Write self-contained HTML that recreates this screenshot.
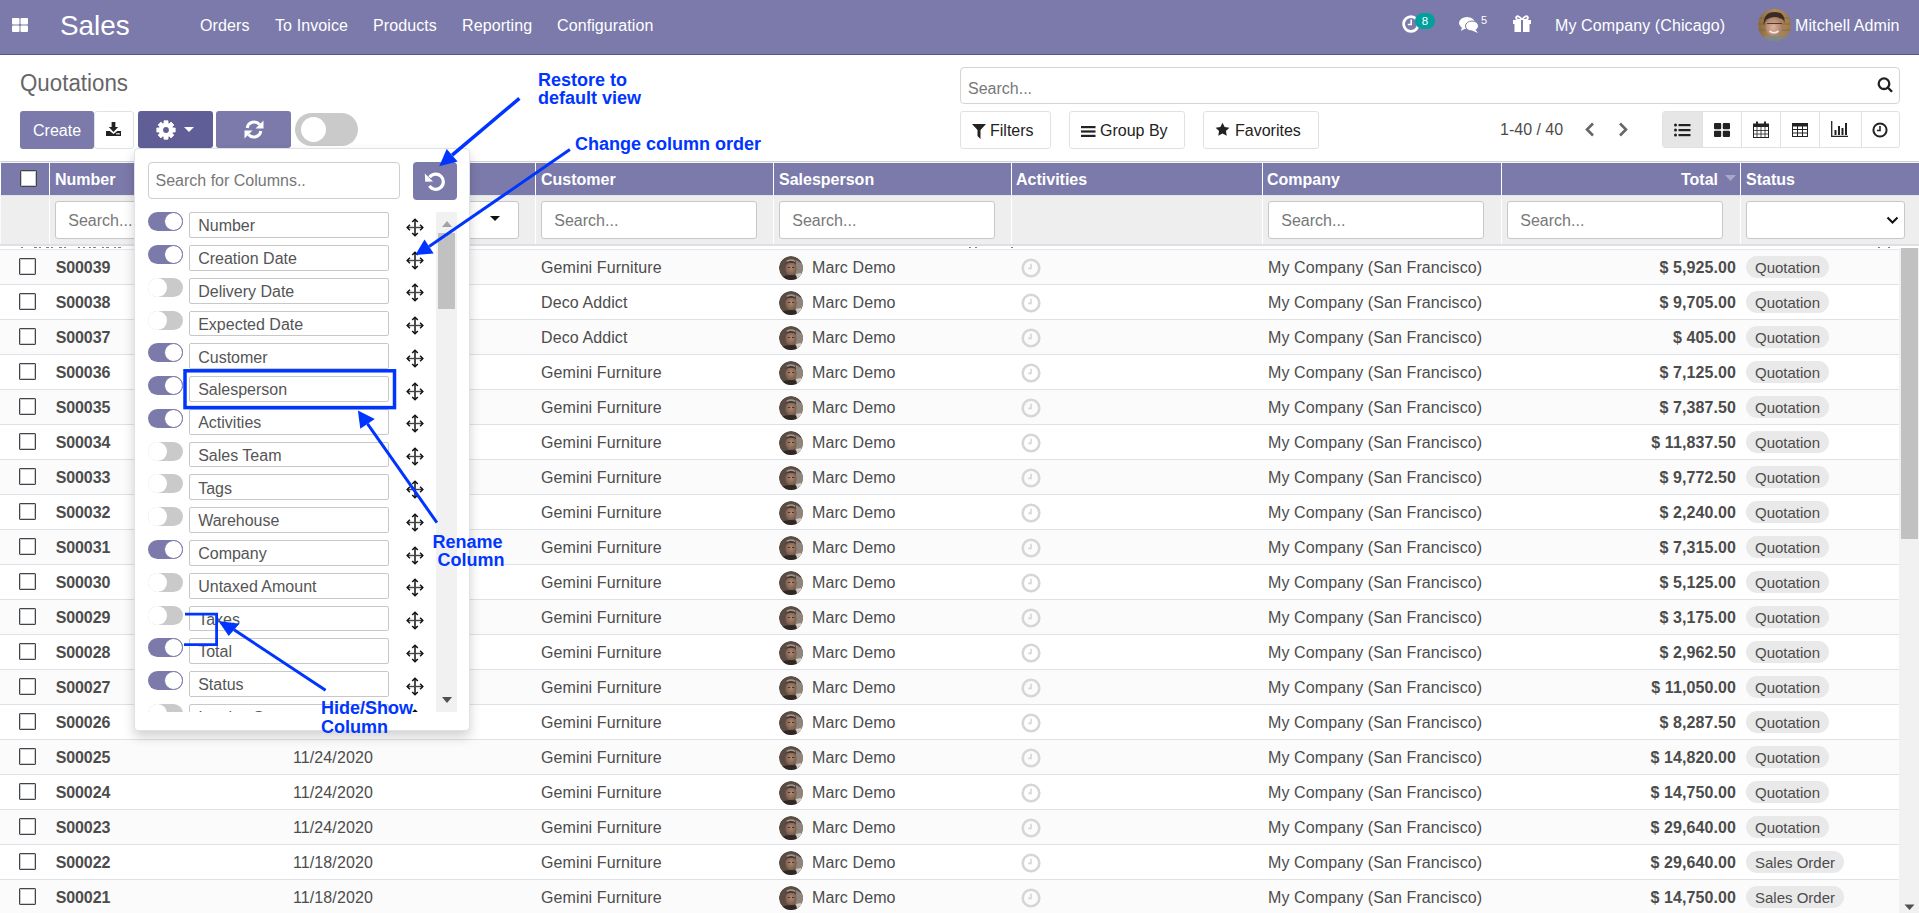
<!DOCTYPE html><html><head><meta charset="utf-8"><style>
*{box-sizing:border-box;}
html,body{margin:0;padding:0;}
body{width:1919px;height:913px;overflow:hidden;position:relative;background:#fff;font-family:"Liberation Sans",sans-serif;font-size:16px;color:#4c4c4c;}
.a{position:absolute;white-space:nowrap;}
.t16{font-size:16px;line-height:16px;}
#nav{position:absolute;left:0;top:0;width:1919px;height:55px;background:#7b7aab;border-bottom:1px solid #58568e;}
#nav .m{position:absolute;top:18px;letter-spacing:0.1px;color:#fff;font-size:16px;line-height:16px;}
.btn{position:absolute;border-radius:3px;}
.inp{position:absolute;background:#fff;border:1px solid #ccc;border-radius:3px;}
.ph{position:absolute;color:#787878;font-size:16px;line-height:16px;white-space:nowrap;}
#thead{position:absolute;left:0;top:161px;width:1919px;height:35px;background:#7b7aab;border-top:1px solid #d2d2d2;border-left:1px solid #fff;box-shadow:inset 0 1px 0 #f4f4f4;}
#thead .h{position:absolute;top:10.3px;color:#fff;font-weight:bold;font-size:16px;line-height:16px;}
#frow{position:absolute;left:0;top:195px;width:1919px;height:51px;background:#eeeeee;border-top:1px solid #e2e5e8;border-left:1px solid #fafafa;}
.vd{position:absolute;width:1px;background:#fff;}
.row{position:absolute;left:0;width:1899px;height:35px;border-bottom:1px solid #dee2e6;}
.row .c{position:absolute;top:10px;letter-spacing:0.1px;font-size:16px;line-height:16px;color:#4c4c4c;white-space:nowrap;}
.cb{position:absolute;width:17px;height:17px;border:1.4px solid #444;background:#fff;border-radius:1px;box-shadow:inset 0 0 0 1px #c6ccd3;}
.badge{position:absolute;height:22px;border-radius:11px;background:#e9e9e9;font-size:15px;line-height:23px;padding:0 9px;color:#4c4c4c;}
#popup{position:absolute;left:134px;top:148px;width:336px;height:582.5px;background:#fff;border:1px solid #dee2e6;border-radius:4px;box-shadow:0 6px 12px rgba(0,0,0,.18);}
.tg{position:absolute;width:35px;height:19px;border-radius:10px;}
.tg.on{background:#7b7aab;}
.tg.off{background:#cacaca;}
.tg .k{position:absolute;top:0;width:19px;height:19px;border-radius:50%;background:#fff;}
.tg.on .k{right:0;border:1px solid #7b7aab;}
.tg.off .k{left:0;}
.fi{position:absolute;left:54.2px;width:199.5px;height:25.8px;border:1px solid #c8c8c8;border-radius:2px;background:#fff;}
.fi span{position:absolute;left:8px;top:5.2px;font-size:16px;line-height:16px;color:#555;white-space:nowrap;}
.mv{position:absolute;left:271px;}
.ann{position:absolute;color:#0035ff;font-weight:bold;font-size:18px;line-height:17px;white-space:nowrap;}
</style></head><body>
<div id="nav">
<svg class="a" style="left:12px;top:18px" width="16" height="14" viewBox="0 0 16 14"><rect x="0" y="0" width="7.5" height="6.5" rx="1" fill="#fff"/><rect x="8.5" y="0" width="7.5" height="6.5" rx="1" fill="#fff"/><rect x="0" y="7.5" width="7.5" height="6.5" rx="1" fill="#fff"/><rect x="8.5" y="7.5" width="7.5" height="6.5" rx="1" fill="#fff"/></svg>
<div class="a" style="left:60px;top:12px;color:#fff;font-size:27.9px;line-height:28px;">Sales</div>
<div class="m" style="left:200px">Orders</div>
<div class="m" style="left:275px">To Invoice</div>
<div class="m" style="left:373px">Products</div>
<div class="m" style="left:462px">Reporting</div>
<div class="m" style="left:557px">Configuration</div>
<svg class="a" style="left:1401px;top:14px" width="20" height="20" viewBox="0 0 20 20"><circle cx="10" cy="10" r="7.4" fill="none" stroke="#fff" stroke-width="2.8"/><path d="M10.2 5.5v5H6.8" fill="none" stroke="#fff" stroke-width="1.6"/></svg>
<div class="a" style="left:1415px;top:13px;width:20px;height:16px;border-radius:8px;background:#00a09d;color:#fff;font-size:11.5px;line-height:16px;text-align:center;">8</div>
<svg class="a" style="left:1459px;top:16px" width="21" height="18" viewBox="0 0 21 18"><ellipse cx="8" cy="7" rx="8" ry="6" fill="#fff"/><path d="M3 11l-1 4 5-3z" fill="#fff"/><ellipse cx="13" cy="10" rx="6.5" ry="5" fill="#fff" stroke="#7b7aab" stroke-width="1"/><path d="M16 13l3 4-6-2.5z" fill="#fff"/></svg>
<div class="a" style="left:1481px;top:15px;color:#fff;font-size:11px;line-height:11px;">5</div>
<svg class="a" style="left:1512px;top:15px" width="20" height="17" viewBox="0 0 20 17"><path d="M10 5C8 1 4 0 4 3c0 2 4 2 6 2zM10 5c2-4 6-5 6-2 0 2-4 2-6 2z" fill="none" stroke="#fff" stroke-width="1.8"/><rect x="1" y="5" width="18" height="4" fill="#fff"/><rect x="2.5" y="9" width="15" height="8" fill="#fff"/><rect x="9" y="5" width="2" height="12" fill="#7b7aab"/></svg>
<div class="m" style="left:1555px">My Company (Chicago)</div>
<div class="a" style="left:1758px;top:8.5px;width:32.5px;height:32px;border-radius:50%;overflow:hidden;background:#9a7a50;"><svg width="33" height="32" viewBox="0 0 32 32"><defs><linearGradient id="bw" x1="0" y1="0" x2="1" y2="0"><stop offset="0" stop-color="#8c6b42"/><stop offset="0.5" stop-color="#b08c5c"/><stop offset="1" stop-color="#9c7a4c"/></linearGradient><radialGradient id="fc" cx="0.45" cy="0.5" r="0.55"><stop offset="0" stop-color="#dcb4a0"/><stop offset="1" stop-color="#a87a62"/></radialGradient></defs><rect width="32" height="32" fill="url(#bw)"/><path d="M0 9h32M0 15h32M0 21h32" stroke="#6e5434" stroke-width="0.8" opacity="0.6"/><path d="M5 16 Q5 3 16 3 Q27 3 26 14 L24 9 Q16 5 8 10z" fill="#3a2c24"/><ellipse cx="15.5" cy="18" rx="8.5" ry="10" fill="url(#fc)"/><path d="M7 11 Q16 5 25 11 L24 8 Q16 2 7 8z" fill="#3a2c24"/><path d="M8.5 14.5h6M17 14.5h6.5M14.5 14.5h2.5" stroke="#4a3a34" stroke-width="1.2"/><path d="M11 22 Q15.5 25.5 20 22" stroke="#f4ece8" stroke-width="1.6" fill="none"/><path d="M4 32 Q6 26 12 27 L20 27 Q27 26 29 32z" fill="#7d8a86"/></svg></div>
<div class="m" style="left:1795px">Mitchell Admin</div>
</div>
<div class="a" style="left:20.3px;top:72.2px;font-size:23.5px;line-height:23px;color:#666;transform:scaleX(0.95);transform-origin:0 0;">Quotations</div>
<div class="btn" style="left:20px;top:111px;width:74px;height:38px;background:#7b7aab;"><span class="a" style="left:13px;top:12px;color:#fff;font-size:16px;line-height:16px;">Create</span></div>
<div class="btn" style="left:94px;top:111px;width:40px;height:38px;background:#fff;border:1px solid #dee2e6;"></div>
<svg class="a" style="left:106px;top:122px" width="15" height="14" viewBox="0 0 16 14" preserveAspectRatio="none"><path d="M6 0h4v5h3l-5 5-5-5h3z" fill="#222"/><path d="M0 9h4l4 3 4-3h4v5H0z" fill="#222"/><rect x="11" y="11" width="1.5" height="1.5" fill="#fff"/><rect x="13" y="11" width="1.5" height="1.5" fill="#fff"/></svg>
<div class="btn" style="left:138px;top:111px;width:75px;height:37px;background:#5f5e97;"></div>
<svg class="a" style="left:156.2px;top:120.1px" width="20" height="20" viewBox="0 0 20 20"><polygon points="7.98,3.40 7.97,0.82 12.03,0.82 12.02,3.40 13.24,3.91 15.05,2.07 17.93,4.95 16.09,6.76 16.60,7.98 19.18,7.97 19.18,12.03 16.60,12.02 16.09,13.24 17.93,15.05 15.05,17.93 13.24,16.09 12.02,16.60 12.03,19.18 7.97,19.18 7.98,16.60 6.76,16.09 4.95,17.93 2.07,15.05 3.91,13.24 3.40,12.02 0.82,12.03 0.82,7.97 3.40,7.98 3.91,6.76 2.07,4.95 4.95,2.07 6.76,3.91" fill="#fff" stroke="#fff" stroke-width="0.8" stroke-linejoin="round"/><circle cx="10" cy="10" r="2.9" fill="#5f5e97"/></svg>
<svg class="a" style="left:184px;top:127px" width="10" height="5" viewBox="0 0 10 5"><path d="M0 0h10L5 5z" fill="#fff"/></svg>
<div class="btn" style="left:216px;top:111px;width:75px;height:37px;background:#7b7aab;"></div>
<svg class="a" style="left:244px;top:120px" width="20" height="19" viewBox="0 0 20 19"><path d="M3.2 8A7 7 0 0 1 15.5 4.5" fill="none" stroke="#fff" stroke-width="3"/><path d="M19.5 0.5v8h-8z" fill="#fff"/><path d="M16.8 11A7 7 0 0 1 4.5 14.5" fill="none" stroke="#fff" stroke-width="3"/><path d="M0.5 18.5v-8h8z" fill="#fff"/></svg>
<div class="a" style="left:295px;top:113px;width:63px;height:33px;border-radius:17px;background:#cacaca;"><div class="a" style="left:6px;top:4px;width:25px;height:25px;border-radius:50%;background:#fff;"></div></div>
<div class="inp" style="left:960px;top:67px;width:940px;height:37px;border-color:#d4d4d4;border-radius:4px;"></div>
<div class="ph" style="left:968px;top:80.5px;">Search...</div>
<svg class="a" style="left:1876px;top:76px" width="18" height="18" viewBox="0 0 18 18"><circle cx="8" cy="7.7" r="5.3" fill="none" stroke="#222" stroke-width="2.3"/><path d="M11.8 11.5l3.6 3.6" stroke="#222" stroke-width="2.3" stroke-linecap="round"/></svg>
<div class="btn" style="left:960px;top:111px;width:91px;height:38px;border:1px solid #dee2e6;background:#fff;"></div>
<div class="btn" style="left:1069px;top:111px;width:116px;height:38px;border:1px solid #dee2e6;background:#fff;"></div>
<div class="btn" style="left:1203px;top:111px;width:116px;height:38px;border:1px solid #dee2e6;background:#fff;"></div>
<svg class="a" style="left:972px;top:124px" width="14" height="15" viewBox="0 0 14 15"><path d="M0 0h14L8.5 6v9L5.5 12V6z" fill="#222"/></svg>
<div class="a t16" style="left:990px;top:122.7px;color:#222;">Filters</div>
<svg class="a" style="left:1081px;top:125.5px" width="14.5" height="11" viewBox="0 0 14.5 11"><rect y="0" width="14.5" height="2.2" fill="#222"/><rect y="4.4" width="14.5" height="2.2" fill="#222"/><rect y="8.8" width="14.5" height="2.2" fill="#222"/></svg>
<div class="a t16" style="left:1100px;top:122.7px;color:#222;">Group By</div>
<svg class="a" style="left:1215px;top:122px" width="15" height="15" viewBox="0 0 24 24"><path d="M12 1l3.4 7 7.6 1-5.5 5.3 1.3 7.7L12 18.3 5.2 22l1.3-7.7L1 9l7.6-1z" fill="#222"/></svg>
<div class="a t16" style="left:1235px;top:122.7px;color:#222;">Favorites</div>
<div class="a t16" style="left:1500px;top:122px;color:#4c4c4c;">1-40 / 40</div>
<svg class="a" style="left:1584px;top:122px" width="11" height="15" viewBox="0 0 11 15"><path d="M9 1.5L3 7.5l6 6" fill="none" stroke="#666" stroke-width="2.6"/></svg>
<svg class="a" style="left:1618px;top:122px" width="11" height="15" viewBox="0 0 11 15"><path d="M2 1.5l6 6-6 6" fill="none" stroke="#666" stroke-width="2.6"/></svg>
<div class="btn" style="left:1662px;top:111px;width:238px;height:37px;border:1px solid #dee2e6;background:#fff;overflow:hidden;"><div class="a" style="left:0;top:0;width:40px;height:37px;background:#e6e6e6;"></div></div>
<div class="a" style="left:1702px;top:112px;width:1px;height:35px;background:#dee2e6;"></div>
<div class="a" style="left:1741px;top:112px;width:1px;height:35px;background:#dee2e6;"></div>
<div class="a" style="left:1780px;top:112px;width:1px;height:35px;background:#dee2e6;"></div>
<div class="a" style="left:1819px;top:112px;width:1px;height:35px;background:#dee2e6;"></div>
<div class="a" style="left:1861px;top:112px;width:1px;height:35px;background:#dee2e6;"></div>
<svg class="a" style="left:1674px;top:123px" width="17" height="14" viewBox="0 0 17 14"><circle cx="1.5" cy="2" r="1.5" fill="#222"/><circle cx="1.5" cy="7" r="1.5" fill="#222"/><circle cx="1.5" cy="12" r="1.5" fill="#222"/><rect x="4.5" y="1" width="12" height="2.2" fill="#222"/><rect x="4.5" y="6" width="12" height="2.2" fill="#222"/><rect x="4.5" y="11" width="12" height="2.2" fill="#222"/></svg>
<svg class="a" style="left:1714px;top:123px" width="16" height="14" viewBox="0 0 16 14"><rect x="0" y="0" width="7.2" height="6.3" rx="1" fill="#222"/><rect x="8.8" y="0" width="7.2" height="6.3" rx="1" fill="#222"/><rect x="0" y="7.7" width="7.2" height="6.3" rx="1" fill="#222"/><rect x="8.8" y="7.7" width="7.2" height="6.3" rx="1" fill="#222"/></svg>
<svg class="a" style="left:1753px;top:121px" width="16" height="17" viewBox="0 0 16 17"><rect x="0.5" y="3" width="15" height="13.5" fill="none" stroke="#222" stroke-width="1"/><rect x="0.5" y="3" width="15" height="3" fill="#222"/><path d="M4 6v10M8 6v10M12 6v10M1 9.5h14M1 13h14" stroke="#222" stroke-width="0.8"/><rect x="3" y="0.5" width="2" height="4" fill="#222"/><rect x="11" y="0.5" width="2" height="4" fill="#222"/></svg>
<svg class="a" style="left:1792px;top:123px" width="16" height="14" viewBox="0 0 16 14"><rect x="0.5" y="0.5" width="15" height="13" fill="none" stroke="#222" stroke-width="1"/><rect x="0.5" y="0.5" width="15" height="3" fill="#222"/><path d="M5.5 3v10M10.5 3v10M1 6.5h14M1 10h14" stroke="#222" stroke-width="1"/></svg>
<svg class="a" style="left:1831px;top:121px" width="17" height="16" viewBox="0 0 17 16"><path d="M0.7 0v15.3H17" fill="none" stroke="#222" stroke-width="1.3"/><rect x="3.5" y="9" width="2" height="5" fill="#222"/><rect x="7" y="5" width="2" height="9" fill="#222"/><rect x="10.5" y="7" width="2" height="7" fill="#222"/><rect x="14" y="2" width="2" height="12" fill="#222"/></svg>
<svg class="a" style="left:1872px;top:122px" width="16" height="16" viewBox="0 0 16 16"><circle cx="8" cy="8" r="6.6" fill="none" stroke="#222" stroke-width="2"/><path d="M8 4v4.5H5" fill="none" stroke="#222" stroke-width="1.6"/></svg>
<div class="row" style="top:250px;height:35px;background:#fbfbfb;">
<div class="cb" style="left:19px;top:8px;"></div>
<div class="c" style="left:55.7px;font-weight:bold;letter-spacing:-0.1px;">S00039</div>
<div class="c" style="left:541px;">Gemini Furniture</div>
<div class="a" style="left:778.5px;top:6px;width:24px;height:24px;border-radius:50%;overflow:hidden;"><svg width="24" height="24" viewBox="0 0 24 24"><defs><radialGradient id="fg" cx="0.5" cy="0.45" r="0.5"><stop offset="0" stop-color="#b08a72"/><stop offset="1" stop-color="#7a5d4d"/></radialGradient></defs><circle cx="12" cy="12" r="12" fill="#5b4c43"/><path d="M17 4 L24 8 V24 H16z" fill="#8f857c"/><ellipse cx="12" cy="12.5" rx="5.6" ry="7.2" fill="url(#fg)"/><path d="M6.5 8 Q12 1.5 17.5 8 Q12 5.5 6.5 8z" fill="#3d322c"/><path d="M7.5 4.5 Q12 2 16.5 4.5 L16 6 Q12 4 8 6z" fill="#9a948e"/><rect x="9" y="11" width="2.2" height="0.9" fill="#3a2a22"/><rect x="13" y="11" width="2.2" height="0.9" fill="#3a2a22"/><path d="M2 21 Q12 17 22 21 V24 H2z" fill="#2f2724"/><path d="M17 18 L22 17 V22 L18 23z" fill="#d4cdc6"/></svg></div>
<div class="c" style="left:812px;">Marc Demo</div>
<svg class="a" style="left:1021px;top:8px" width="20" height="20" viewBox="0 0 20 20"><circle cx="10" cy="10" r="8.3" fill="none" stroke="#d6d6d6" stroke-width="2.6"/><path d="M10 5.8v4.6H7.2" fill="none" stroke="#d6d6d6" stroke-width="1.6"/></svg>
<div class="c" style="left:1268px;">My Company (San Francisco)</div>
<div class="c" style="right:163px;font-weight:bold;">$ 5,925.00</div>
<div class="badge" style="left:1746px;top:6px;">Quotation</div>
</div>
<div class="row" style="top:285px;height:35px;background:#fff;">
<div class="cb" style="left:19px;top:8px;"></div>
<div class="c" style="left:55.7px;font-weight:bold;letter-spacing:-0.1px;">S00038</div>
<div class="c" style="left:541px;">Deco Addict</div>
<div class="a" style="left:778.5px;top:6px;width:24px;height:24px;border-radius:50%;overflow:hidden;"><svg width="24" height="24" viewBox="0 0 24 24"><defs><radialGradient id="fg" cx="0.5" cy="0.45" r="0.5"><stop offset="0" stop-color="#b08a72"/><stop offset="1" stop-color="#7a5d4d"/></radialGradient></defs><circle cx="12" cy="12" r="12" fill="#5b4c43"/><path d="M17 4 L24 8 V24 H16z" fill="#8f857c"/><ellipse cx="12" cy="12.5" rx="5.6" ry="7.2" fill="url(#fg)"/><path d="M6.5 8 Q12 1.5 17.5 8 Q12 5.5 6.5 8z" fill="#3d322c"/><path d="M7.5 4.5 Q12 2 16.5 4.5 L16 6 Q12 4 8 6z" fill="#9a948e"/><rect x="9" y="11" width="2.2" height="0.9" fill="#3a2a22"/><rect x="13" y="11" width="2.2" height="0.9" fill="#3a2a22"/><path d="M2 21 Q12 17 22 21 V24 H2z" fill="#2f2724"/><path d="M17 18 L22 17 V22 L18 23z" fill="#d4cdc6"/></svg></div>
<div class="c" style="left:812px;">Marc Demo</div>
<svg class="a" style="left:1021px;top:8px" width="20" height="20" viewBox="0 0 20 20"><circle cx="10" cy="10" r="8.3" fill="none" stroke="#d6d6d6" stroke-width="2.6"/><path d="M10 5.8v4.6H7.2" fill="none" stroke="#d6d6d6" stroke-width="1.6"/></svg>
<div class="c" style="left:1268px;">My Company (San Francisco)</div>
<div class="c" style="right:163px;font-weight:bold;">$ 9,705.00</div>
<div class="badge" style="left:1746px;top:6px;">Quotation</div>
</div>
<div class="row" style="top:320px;height:35px;background:#fbfbfb;">
<div class="cb" style="left:19px;top:8px;"></div>
<div class="c" style="left:55.7px;font-weight:bold;letter-spacing:-0.1px;">S00037</div>
<div class="c" style="left:541px;">Deco Addict</div>
<div class="a" style="left:778.5px;top:6px;width:24px;height:24px;border-radius:50%;overflow:hidden;"><svg width="24" height="24" viewBox="0 0 24 24"><defs><radialGradient id="fg" cx="0.5" cy="0.45" r="0.5"><stop offset="0" stop-color="#b08a72"/><stop offset="1" stop-color="#7a5d4d"/></radialGradient></defs><circle cx="12" cy="12" r="12" fill="#5b4c43"/><path d="M17 4 L24 8 V24 H16z" fill="#8f857c"/><ellipse cx="12" cy="12.5" rx="5.6" ry="7.2" fill="url(#fg)"/><path d="M6.5 8 Q12 1.5 17.5 8 Q12 5.5 6.5 8z" fill="#3d322c"/><path d="M7.5 4.5 Q12 2 16.5 4.5 L16 6 Q12 4 8 6z" fill="#9a948e"/><rect x="9" y="11" width="2.2" height="0.9" fill="#3a2a22"/><rect x="13" y="11" width="2.2" height="0.9" fill="#3a2a22"/><path d="M2 21 Q12 17 22 21 V24 H2z" fill="#2f2724"/><path d="M17 18 L22 17 V22 L18 23z" fill="#d4cdc6"/></svg></div>
<div class="c" style="left:812px;">Marc Demo</div>
<svg class="a" style="left:1021px;top:8px" width="20" height="20" viewBox="0 0 20 20"><circle cx="10" cy="10" r="8.3" fill="none" stroke="#d6d6d6" stroke-width="2.6"/><path d="M10 5.8v4.6H7.2" fill="none" stroke="#d6d6d6" stroke-width="1.6"/></svg>
<div class="c" style="left:1268px;">My Company (San Francisco)</div>
<div class="c" style="right:163px;font-weight:bold;">$ 405.00</div>
<div class="badge" style="left:1746px;top:6px;">Quotation</div>
</div>
<div class="row" style="top:355px;height:35px;background:#fff;">
<div class="cb" style="left:19px;top:8px;"></div>
<div class="c" style="left:55.7px;font-weight:bold;letter-spacing:-0.1px;">S00036</div>
<div class="c" style="left:541px;">Gemini Furniture</div>
<div class="a" style="left:778.5px;top:6px;width:24px;height:24px;border-radius:50%;overflow:hidden;"><svg width="24" height="24" viewBox="0 0 24 24"><defs><radialGradient id="fg" cx="0.5" cy="0.45" r="0.5"><stop offset="0" stop-color="#b08a72"/><stop offset="1" stop-color="#7a5d4d"/></radialGradient></defs><circle cx="12" cy="12" r="12" fill="#5b4c43"/><path d="M17 4 L24 8 V24 H16z" fill="#8f857c"/><ellipse cx="12" cy="12.5" rx="5.6" ry="7.2" fill="url(#fg)"/><path d="M6.5 8 Q12 1.5 17.5 8 Q12 5.5 6.5 8z" fill="#3d322c"/><path d="M7.5 4.5 Q12 2 16.5 4.5 L16 6 Q12 4 8 6z" fill="#9a948e"/><rect x="9" y="11" width="2.2" height="0.9" fill="#3a2a22"/><rect x="13" y="11" width="2.2" height="0.9" fill="#3a2a22"/><path d="M2 21 Q12 17 22 21 V24 H2z" fill="#2f2724"/><path d="M17 18 L22 17 V22 L18 23z" fill="#d4cdc6"/></svg></div>
<div class="c" style="left:812px;">Marc Demo</div>
<svg class="a" style="left:1021px;top:8px" width="20" height="20" viewBox="0 0 20 20"><circle cx="10" cy="10" r="8.3" fill="none" stroke="#d6d6d6" stroke-width="2.6"/><path d="M10 5.8v4.6H7.2" fill="none" stroke="#d6d6d6" stroke-width="1.6"/></svg>
<div class="c" style="left:1268px;">My Company (San Francisco)</div>
<div class="c" style="right:163px;font-weight:bold;">$ 7,125.00</div>
<div class="badge" style="left:1746px;top:6px;">Quotation</div>
</div>
<div class="row" style="top:390px;height:35px;background:#fbfbfb;">
<div class="cb" style="left:19px;top:8px;"></div>
<div class="c" style="left:55.7px;font-weight:bold;letter-spacing:-0.1px;">S00035</div>
<div class="c" style="left:541px;">Gemini Furniture</div>
<div class="a" style="left:778.5px;top:6px;width:24px;height:24px;border-radius:50%;overflow:hidden;"><svg width="24" height="24" viewBox="0 0 24 24"><defs><radialGradient id="fg" cx="0.5" cy="0.45" r="0.5"><stop offset="0" stop-color="#b08a72"/><stop offset="1" stop-color="#7a5d4d"/></radialGradient></defs><circle cx="12" cy="12" r="12" fill="#5b4c43"/><path d="M17 4 L24 8 V24 H16z" fill="#8f857c"/><ellipse cx="12" cy="12.5" rx="5.6" ry="7.2" fill="url(#fg)"/><path d="M6.5 8 Q12 1.5 17.5 8 Q12 5.5 6.5 8z" fill="#3d322c"/><path d="M7.5 4.5 Q12 2 16.5 4.5 L16 6 Q12 4 8 6z" fill="#9a948e"/><rect x="9" y="11" width="2.2" height="0.9" fill="#3a2a22"/><rect x="13" y="11" width="2.2" height="0.9" fill="#3a2a22"/><path d="M2 21 Q12 17 22 21 V24 H2z" fill="#2f2724"/><path d="M17 18 L22 17 V22 L18 23z" fill="#d4cdc6"/></svg></div>
<div class="c" style="left:812px;">Marc Demo</div>
<svg class="a" style="left:1021px;top:8px" width="20" height="20" viewBox="0 0 20 20"><circle cx="10" cy="10" r="8.3" fill="none" stroke="#d6d6d6" stroke-width="2.6"/><path d="M10 5.8v4.6H7.2" fill="none" stroke="#d6d6d6" stroke-width="1.6"/></svg>
<div class="c" style="left:1268px;">My Company (San Francisco)</div>
<div class="c" style="right:163px;font-weight:bold;">$ 7,387.50</div>
<div class="badge" style="left:1746px;top:6px;">Quotation</div>
</div>
<div class="row" style="top:425px;height:35px;background:#fff;">
<div class="cb" style="left:19px;top:8px;"></div>
<div class="c" style="left:55.7px;font-weight:bold;letter-spacing:-0.1px;">S00034</div>
<div class="c" style="left:541px;">Gemini Furniture</div>
<div class="a" style="left:778.5px;top:6px;width:24px;height:24px;border-radius:50%;overflow:hidden;"><svg width="24" height="24" viewBox="0 0 24 24"><defs><radialGradient id="fg" cx="0.5" cy="0.45" r="0.5"><stop offset="0" stop-color="#b08a72"/><stop offset="1" stop-color="#7a5d4d"/></radialGradient></defs><circle cx="12" cy="12" r="12" fill="#5b4c43"/><path d="M17 4 L24 8 V24 H16z" fill="#8f857c"/><ellipse cx="12" cy="12.5" rx="5.6" ry="7.2" fill="url(#fg)"/><path d="M6.5 8 Q12 1.5 17.5 8 Q12 5.5 6.5 8z" fill="#3d322c"/><path d="M7.5 4.5 Q12 2 16.5 4.5 L16 6 Q12 4 8 6z" fill="#9a948e"/><rect x="9" y="11" width="2.2" height="0.9" fill="#3a2a22"/><rect x="13" y="11" width="2.2" height="0.9" fill="#3a2a22"/><path d="M2 21 Q12 17 22 21 V24 H2z" fill="#2f2724"/><path d="M17 18 L22 17 V22 L18 23z" fill="#d4cdc6"/></svg></div>
<div class="c" style="left:812px;">Marc Demo</div>
<svg class="a" style="left:1021px;top:8px" width="20" height="20" viewBox="0 0 20 20"><circle cx="10" cy="10" r="8.3" fill="none" stroke="#d6d6d6" stroke-width="2.6"/><path d="M10 5.8v4.6H7.2" fill="none" stroke="#d6d6d6" stroke-width="1.6"/></svg>
<div class="c" style="left:1268px;">My Company (San Francisco)</div>
<div class="c" style="right:163px;font-weight:bold;">$ 11,837.50</div>
<div class="badge" style="left:1746px;top:6px;">Quotation</div>
</div>
<div class="row" style="top:460px;height:35px;background:#fbfbfb;">
<div class="cb" style="left:19px;top:8px;"></div>
<div class="c" style="left:55.7px;font-weight:bold;letter-spacing:-0.1px;">S00033</div>
<div class="c" style="left:541px;">Gemini Furniture</div>
<div class="a" style="left:778.5px;top:6px;width:24px;height:24px;border-radius:50%;overflow:hidden;"><svg width="24" height="24" viewBox="0 0 24 24"><defs><radialGradient id="fg" cx="0.5" cy="0.45" r="0.5"><stop offset="0" stop-color="#b08a72"/><stop offset="1" stop-color="#7a5d4d"/></radialGradient></defs><circle cx="12" cy="12" r="12" fill="#5b4c43"/><path d="M17 4 L24 8 V24 H16z" fill="#8f857c"/><ellipse cx="12" cy="12.5" rx="5.6" ry="7.2" fill="url(#fg)"/><path d="M6.5 8 Q12 1.5 17.5 8 Q12 5.5 6.5 8z" fill="#3d322c"/><path d="M7.5 4.5 Q12 2 16.5 4.5 L16 6 Q12 4 8 6z" fill="#9a948e"/><rect x="9" y="11" width="2.2" height="0.9" fill="#3a2a22"/><rect x="13" y="11" width="2.2" height="0.9" fill="#3a2a22"/><path d="M2 21 Q12 17 22 21 V24 H2z" fill="#2f2724"/><path d="M17 18 L22 17 V22 L18 23z" fill="#d4cdc6"/></svg></div>
<div class="c" style="left:812px;">Marc Demo</div>
<svg class="a" style="left:1021px;top:8px" width="20" height="20" viewBox="0 0 20 20"><circle cx="10" cy="10" r="8.3" fill="none" stroke="#d6d6d6" stroke-width="2.6"/><path d="M10 5.8v4.6H7.2" fill="none" stroke="#d6d6d6" stroke-width="1.6"/></svg>
<div class="c" style="left:1268px;">My Company (San Francisco)</div>
<div class="c" style="right:163px;font-weight:bold;">$ 9,772.50</div>
<div class="badge" style="left:1746px;top:6px;">Quotation</div>
</div>
<div class="row" style="top:495px;height:35px;background:#fff;">
<div class="cb" style="left:19px;top:8px;"></div>
<div class="c" style="left:55.7px;font-weight:bold;letter-spacing:-0.1px;">S00032</div>
<div class="c" style="left:541px;">Gemini Furniture</div>
<div class="a" style="left:778.5px;top:6px;width:24px;height:24px;border-radius:50%;overflow:hidden;"><svg width="24" height="24" viewBox="0 0 24 24"><defs><radialGradient id="fg" cx="0.5" cy="0.45" r="0.5"><stop offset="0" stop-color="#b08a72"/><stop offset="1" stop-color="#7a5d4d"/></radialGradient></defs><circle cx="12" cy="12" r="12" fill="#5b4c43"/><path d="M17 4 L24 8 V24 H16z" fill="#8f857c"/><ellipse cx="12" cy="12.5" rx="5.6" ry="7.2" fill="url(#fg)"/><path d="M6.5 8 Q12 1.5 17.5 8 Q12 5.5 6.5 8z" fill="#3d322c"/><path d="M7.5 4.5 Q12 2 16.5 4.5 L16 6 Q12 4 8 6z" fill="#9a948e"/><rect x="9" y="11" width="2.2" height="0.9" fill="#3a2a22"/><rect x="13" y="11" width="2.2" height="0.9" fill="#3a2a22"/><path d="M2 21 Q12 17 22 21 V24 H2z" fill="#2f2724"/><path d="M17 18 L22 17 V22 L18 23z" fill="#d4cdc6"/></svg></div>
<div class="c" style="left:812px;">Marc Demo</div>
<svg class="a" style="left:1021px;top:8px" width="20" height="20" viewBox="0 0 20 20"><circle cx="10" cy="10" r="8.3" fill="none" stroke="#d6d6d6" stroke-width="2.6"/><path d="M10 5.8v4.6H7.2" fill="none" stroke="#d6d6d6" stroke-width="1.6"/></svg>
<div class="c" style="left:1268px;">My Company (San Francisco)</div>
<div class="c" style="right:163px;font-weight:bold;">$ 2,240.00</div>
<div class="badge" style="left:1746px;top:6px;">Quotation</div>
</div>
<div class="row" style="top:530px;height:35px;background:#fbfbfb;">
<div class="cb" style="left:19px;top:8px;"></div>
<div class="c" style="left:55.7px;font-weight:bold;letter-spacing:-0.1px;">S00031</div>
<div class="c" style="left:541px;">Gemini Furniture</div>
<div class="a" style="left:778.5px;top:6px;width:24px;height:24px;border-radius:50%;overflow:hidden;"><svg width="24" height="24" viewBox="0 0 24 24"><defs><radialGradient id="fg" cx="0.5" cy="0.45" r="0.5"><stop offset="0" stop-color="#b08a72"/><stop offset="1" stop-color="#7a5d4d"/></radialGradient></defs><circle cx="12" cy="12" r="12" fill="#5b4c43"/><path d="M17 4 L24 8 V24 H16z" fill="#8f857c"/><ellipse cx="12" cy="12.5" rx="5.6" ry="7.2" fill="url(#fg)"/><path d="M6.5 8 Q12 1.5 17.5 8 Q12 5.5 6.5 8z" fill="#3d322c"/><path d="M7.5 4.5 Q12 2 16.5 4.5 L16 6 Q12 4 8 6z" fill="#9a948e"/><rect x="9" y="11" width="2.2" height="0.9" fill="#3a2a22"/><rect x="13" y="11" width="2.2" height="0.9" fill="#3a2a22"/><path d="M2 21 Q12 17 22 21 V24 H2z" fill="#2f2724"/><path d="M17 18 L22 17 V22 L18 23z" fill="#d4cdc6"/></svg></div>
<div class="c" style="left:812px;">Marc Demo</div>
<svg class="a" style="left:1021px;top:8px" width="20" height="20" viewBox="0 0 20 20"><circle cx="10" cy="10" r="8.3" fill="none" stroke="#d6d6d6" stroke-width="2.6"/><path d="M10 5.8v4.6H7.2" fill="none" stroke="#d6d6d6" stroke-width="1.6"/></svg>
<div class="c" style="left:1268px;">My Company (San Francisco)</div>
<div class="c" style="right:163px;font-weight:bold;">$ 7,315.00</div>
<div class="badge" style="left:1746px;top:6px;">Quotation</div>
</div>
<div class="row" style="top:565px;height:35px;background:#fff;">
<div class="cb" style="left:19px;top:8px;"></div>
<div class="c" style="left:55.7px;font-weight:bold;letter-spacing:-0.1px;">S00030</div>
<div class="c" style="left:541px;">Gemini Furniture</div>
<div class="a" style="left:778.5px;top:6px;width:24px;height:24px;border-radius:50%;overflow:hidden;"><svg width="24" height="24" viewBox="0 0 24 24"><defs><radialGradient id="fg" cx="0.5" cy="0.45" r="0.5"><stop offset="0" stop-color="#b08a72"/><stop offset="1" stop-color="#7a5d4d"/></radialGradient></defs><circle cx="12" cy="12" r="12" fill="#5b4c43"/><path d="M17 4 L24 8 V24 H16z" fill="#8f857c"/><ellipse cx="12" cy="12.5" rx="5.6" ry="7.2" fill="url(#fg)"/><path d="M6.5 8 Q12 1.5 17.5 8 Q12 5.5 6.5 8z" fill="#3d322c"/><path d="M7.5 4.5 Q12 2 16.5 4.5 L16 6 Q12 4 8 6z" fill="#9a948e"/><rect x="9" y="11" width="2.2" height="0.9" fill="#3a2a22"/><rect x="13" y="11" width="2.2" height="0.9" fill="#3a2a22"/><path d="M2 21 Q12 17 22 21 V24 H2z" fill="#2f2724"/><path d="M17 18 L22 17 V22 L18 23z" fill="#d4cdc6"/></svg></div>
<div class="c" style="left:812px;">Marc Demo</div>
<svg class="a" style="left:1021px;top:8px" width="20" height="20" viewBox="0 0 20 20"><circle cx="10" cy="10" r="8.3" fill="none" stroke="#d6d6d6" stroke-width="2.6"/><path d="M10 5.8v4.6H7.2" fill="none" stroke="#d6d6d6" stroke-width="1.6"/></svg>
<div class="c" style="left:1268px;">My Company (San Francisco)</div>
<div class="c" style="right:163px;font-weight:bold;">$ 5,125.00</div>
<div class="badge" style="left:1746px;top:6px;">Quotation</div>
</div>
<div class="row" style="top:600px;height:35px;background:#fbfbfb;">
<div class="cb" style="left:19px;top:8px;"></div>
<div class="c" style="left:55.7px;font-weight:bold;letter-spacing:-0.1px;">S00029</div>
<div class="c" style="left:541px;">Gemini Furniture</div>
<div class="a" style="left:778.5px;top:6px;width:24px;height:24px;border-radius:50%;overflow:hidden;"><svg width="24" height="24" viewBox="0 0 24 24"><defs><radialGradient id="fg" cx="0.5" cy="0.45" r="0.5"><stop offset="0" stop-color="#b08a72"/><stop offset="1" stop-color="#7a5d4d"/></radialGradient></defs><circle cx="12" cy="12" r="12" fill="#5b4c43"/><path d="M17 4 L24 8 V24 H16z" fill="#8f857c"/><ellipse cx="12" cy="12.5" rx="5.6" ry="7.2" fill="url(#fg)"/><path d="M6.5 8 Q12 1.5 17.5 8 Q12 5.5 6.5 8z" fill="#3d322c"/><path d="M7.5 4.5 Q12 2 16.5 4.5 L16 6 Q12 4 8 6z" fill="#9a948e"/><rect x="9" y="11" width="2.2" height="0.9" fill="#3a2a22"/><rect x="13" y="11" width="2.2" height="0.9" fill="#3a2a22"/><path d="M2 21 Q12 17 22 21 V24 H2z" fill="#2f2724"/><path d="M17 18 L22 17 V22 L18 23z" fill="#d4cdc6"/></svg></div>
<div class="c" style="left:812px;">Marc Demo</div>
<svg class="a" style="left:1021px;top:8px" width="20" height="20" viewBox="0 0 20 20"><circle cx="10" cy="10" r="8.3" fill="none" stroke="#d6d6d6" stroke-width="2.6"/><path d="M10 5.8v4.6H7.2" fill="none" stroke="#d6d6d6" stroke-width="1.6"/></svg>
<div class="c" style="left:1268px;">My Company (San Francisco)</div>
<div class="c" style="right:163px;font-weight:bold;">$ 3,175.00</div>
<div class="badge" style="left:1746px;top:6px;">Quotation</div>
</div>
<div class="row" style="top:635px;height:35px;background:#fff;">
<div class="cb" style="left:19px;top:8px;"></div>
<div class="c" style="left:55.7px;font-weight:bold;letter-spacing:-0.1px;">S00028</div>
<div class="c" style="left:541px;">Gemini Furniture</div>
<div class="a" style="left:778.5px;top:6px;width:24px;height:24px;border-radius:50%;overflow:hidden;"><svg width="24" height="24" viewBox="0 0 24 24"><defs><radialGradient id="fg" cx="0.5" cy="0.45" r="0.5"><stop offset="0" stop-color="#b08a72"/><stop offset="1" stop-color="#7a5d4d"/></radialGradient></defs><circle cx="12" cy="12" r="12" fill="#5b4c43"/><path d="M17 4 L24 8 V24 H16z" fill="#8f857c"/><ellipse cx="12" cy="12.5" rx="5.6" ry="7.2" fill="url(#fg)"/><path d="M6.5 8 Q12 1.5 17.5 8 Q12 5.5 6.5 8z" fill="#3d322c"/><path d="M7.5 4.5 Q12 2 16.5 4.5 L16 6 Q12 4 8 6z" fill="#9a948e"/><rect x="9" y="11" width="2.2" height="0.9" fill="#3a2a22"/><rect x="13" y="11" width="2.2" height="0.9" fill="#3a2a22"/><path d="M2 21 Q12 17 22 21 V24 H2z" fill="#2f2724"/><path d="M17 18 L22 17 V22 L18 23z" fill="#d4cdc6"/></svg></div>
<div class="c" style="left:812px;">Marc Demo</div>
<svg class="a" style="left:1021px;top:8px" width="20" height="20" viewBox="0 0 20 20"><circle cx="10" cy="10" r="8.3" fill="none" stroke="#d6d6d6" stroke-width="2.6"/><path d="M10 5.8v4.6H7.2" fill="none" stroke="#d6d6d6" stroke-width="1.6"/></svg>
<div class="c" style="left:1268px;">My Company (San Francisco)</div>
<div class="c" style="right:163px;font-weight:bold;">$ 2,962.50</div>
<div class="badge" style="left:1746px;top:6px;">Quotation</div>
</div>
<div class="row" style="top:670px;height:35px;background:#fbfbfb;">
<div class="cb" style="left:19px;top:8px;"></div>
<div class="c" style="left:55.7px;font-weight:bold;letter-spacing:-0.1px;">S00027</div>
<div class="c" style="left:541px;">Gemini Furniture</div>
<div class="a" style="left:778.5px;top:6px;width:24px;height:24px;border-radius:50%;overflow:hidden;"><svg width="24" height="24" viewBox="0 0 24 24"><defs><radialGradient id="fg" cx="0.5" cy="0.45" r="0.5"><stop offset="0" stop-color="#b08a72"/><stop offset="1" stop-color="#7a5d4d"/></radialGradient></defs><circle cx="12" cy="12" r="12" fill="#5b4c43"/><path d="M17 4 L24 8 V24 H16z" fill="#8f857c"/><ellipse cx="12" cy="12.5" rx="5.6" ry="7.2" fill="url(#fg)"/><path d="M6.5 8 Q12 1.5 17.5 8 Q12 5.5 6.5 8z" fill="#3d322c"/><path d="M7.5 4.5 Q12 2 16.5 4.5 L16 6 Q12 4 8 6z" fill="#9a948e"/><rect x="9" y="11" width="2.2" height="0.9" fill="#3a2a22"/><rect x="13" y="11" width="2.2" height="0.9" fill="#3a2a22"/><path d="M2 21 Q12 17 22 21 V24 H2z" fill="#2f2724"/><path d="M17 18 L22 17 V22 L18 23z" fill="#d4cdc6"/></svg></div>
<div class="c" style="left:812px;">Marc Demo</div>
<svg class="a" style="left:1021px;top:8px" width="20" height="20" viewBox="0 0 20 20"><circle cx="10" cy="10" r="8.3" fill="none" stroke="#d6d6d6" stroke-width="2.6"/><path d="M10 5.8v4.6H7.2" fill="none" stroke="#d6d6d6" stroke-width="1.6"/></svg>
<div class="c" style="left:1268px;">My Company (San Francisco)</div>
<div class="c" style="right:163px;font-weight:bold;">$ 11,050.00</div>
<div class="badge" style="left:1746px;top:6px;">Quotation</div>
</div>
<div class="row" style="top:705px;height:35px;background:#fff;">
<div class="cb" style="left:19px;top:8px;"></div>
<div class="c" style="left:55.7px;font-weight:bold;letter-spacing:-0.1px;">S00026</div>
<div class="c" style="left:293px;">11/24/2020</div>
<div class="c" style="left:541px;">Gemini Furniture</div>
<div class="a" style="left:778.5px;top:6px;width:24px;height:24px;border-radius:50%;overflow:hidden;"><svg width="24" height="24" viewBox="0 0 24 24"><defs><radialGradient id="fg" cx="0.5" cy="0.45" r="0.5"><stop offset="0" stop-color="#b08a72"/><stop offset="1" stop-color="#7a5d4d"/></radialGradient></defs><circle cx="12" cy="12" r="12" fill="#5b4c43"/><path d="M17 4 L24 8 V24 H16z" fill="#8f857c"/><ellipse cx="12" cy="12.5" rx="5.6" ry="7.2" fill="url(#fg)"/><path d="M6.5 8 Q12 1.5 17.5 8 Q12 5.5 6.5 8z" fill="#3d322c"/><path d="M7.5 4.5 Q12 2 16.5 4.5 L16 6 Q12 4 8 6z" fill="#9a948e"/><rect x="9" y="11" width="2.2" height="0.9" fill="#3a2a22"/><rect x="13" y="11" width="2.2" height="0.9" fill="#3a2a22"/><path d="M2 21 Q12 17 22 21 V24 H2z" fill="#2f2724"/><path d="M17 18 L22 17 V22 L18 23z" fill="#d4cdc6"/></svg></div>
<div class="c" style="left:812px;">Marc Demo</div>
<svg class="a" style="left:1021px;top:8px" width="20" height="20" viewBox="0 0 20 20"><circle cx="10" cy="10" r="8.3" fill="none" stroke="#d6d6d6" stroke-width="2.6"/><path d="M10 5.8v4.6H7.2" fill="none" stroke="#d6d6d6" stroke-width="1.6"/></svg>
<div class="c" style="left:1268px;">My Company (San Francisco)</div>
<div class="c" style="right:163px;font-weight:bold;">$ 8,287.50</div>
<div class="badge" style="left:1746px;top:6px;">Quotation</div>
</div>
<div class="row" style="top:740px;height:35px;background:#fbfbfb;">
<div class="cb" style="left:19px;top:8px;"></div>
<div class="c" style="left:55.7px;font-weight:bold;letter-spacing:-0.1px;">S00025</div>
<div class="c" style="left:293px;">11/24/2020</div>
<div class="c" style="left:541px;">Gemini Furniture</div>
<div class="a" style="left:778.5px;top:6px;width:24px;height:24px;border-radius:50%;overflow:hidden;"><svg width="24" height="24" viewBox="0 0 24 24"><defs><radialGradient id="fg" cx="0.5" cy="0.45" r="0.5"><stop offset="0" stop-color="#b08a72"/><stop offset="1" stop-color="#7a5d4d"/></radialGradient></defs><circle cx="12" cy="12" r="12" fill="#5b4c43"/><path d="M17 4 L24 8 V24 H16z" fill="#8f857c"/><ellipse cx="12" cy="12.5" rx="5.6" ry="7.2" fill="url(#fg)"/><path d="M6.5 8 Q12 1.5 17.5 8 Q12 5.5 6.5 8z" fill="#3d322c"/><path d="M7.5 4.5 Q12 2 16.5 4.5 L16 6 Q12 4 8 6z" fill="#9a948e"/><rect x="9" y="11" width="2.2" height="0.9" fill="#3a2a22"/><rect x="13" y="11" width="2.2" height="0.9" fill="#3a2a22"/><path d="M2 21 Q12 17 22 21 V24 H2z" fill="#2f2724"/><path d="M17 18 L22 17 V22 L18 23z" fill="#d4cdc6"/></svg></div>
<div class="c" style="left:812px;">Marc Demo</div>
<svg class="a" style="left:1021px;top:8px" width="20" height="20" viewBox="0 0 20 20"><circle cx="10" cy="10" r="8.3" fill="none" stroke="#d6d6d6" stroke-width="2.6"/><path d="M10 5.8v4.6H7.2" fill="none" stroke="#d6d6d6" stroke-width="1.6"/></svg>
<div class="c" style="left:1268px;">My Company (San Francisco)</div>
<div class="c" style="right:163px;font-weight:bold;">$ 14,820.00</div>
<div class="badge" style="left:1746px;top:6px;">Quotation</div>
</div>
<div class="row" style="top:775px;height:35px;background:#fff;">
<div class="cb" style="left:19px;top:8px;"></div>
<div class="c" style="left:55.7px;font-weight:bold;letter-spacing:-0.1px;">S00024</div>
<div class="c" style="left:293px;">11/24/2020</div>
<div class="c" style="left:541px;">Gemini Furniture</div>
<div class="a" style="left:778.5px;top:6px;width:24px;height:24px;border-radius:50%;overflow:hidden;"><svg width="24" height="24" viewBox="0 0 24 24"><defs><radialGradient id="fg" cx="0.5" cy="0.45" r="0.5"><stop offset="0" stop-color="#b08a72"/><stop offset="1" stop-color="#7a5d4d"/></radialGradient></defs><circle cx="12" cy="12" r="12" fill="#5b4c43"/><path d="M17 4 L24 8 V24 H16z" fill="#8f857c"/><ellipse cx="12" cy="12.5" rx="5.6" ry="7.2" fill="url(#fg)"/><path d="M6.5 8 Q12 1.5 17.5 8 Q12 5.5 6.5 8z" fill="#3d322c"/><path d="M7.5 4.5 Q12 2 16.5 4.5 L16 6 Q12 4 8 6z" fill="#9a948e"/><rect x="9" y="11" width="2.2" height="0.9" fill="#3a2a22"/><rect x="13" y="11" width="2.2" height="0.9" fill="#3a2a22"/><path d="M2 21 Q12 17 22 21 V24 H2z" fill="#2f2724"/><path d="M17 18 L22 17 V22 L18 23z" fill="#d4cdc6"/></svg></div>
<div class="c" style="left:812px;">Marc Demo</div>
<svg class="a" style="left:1021px;top:8px" width="20" height="20" viewBox="0 0 20 20"><circle cx="10" cy="10" r="8.3" fill="none" stroke="#d6d6d6" stroke-width="2.6"/><path d="M10 5.8v4.6H7.2" fill="none" stroke="#d6d6d6" stroke-width="1.6"/></svg>
<div class="c" style="left:1268px;">My Company (San Francisco)</div>
<div class="c" style="right:163px;font-weight:bold;">$ 14,750.00</div>
<div class="badge" style="left:1746px;top:6px;">Quotation</div>
</div>
<div class="row" style="top:810px;height:35px;background:#fbfbfb;">
<div class="cb" style="left:19px;top:8px;"></div>
<div class="c" style="left:55.7px;font-weight:bold;letter-spacing:-0.1px;">S00023</div>
<div class="c" style="left:293px;">11/24/2020</div>
<div class="c" style="left:541px;">Gemini Furniture</div>
<div class="a" style="left:778.5px;top:6px;width:24px;height:24px;border-radius:50%;overflow:hidden;"><svg width="24" height="24" viewBox="0 0 24 24"><defs><radialGradient id="fg" cx="0.5" cy="0.45" r="0.5"><stop offset="0" stop-color="#b08a72"/><stop offset="1" stop-color="#7a5d4d"/></radialGradient></defs><circle cx="12" cy="12" r="12" fill="#5b4c43"/><path d="M17 4 L24 8 V24 H16z" fill="#8f857c"/><ellipse cx="12" cy="12.5" rx="5.6" ry="7.2" fill="url(#fg)"/><path d="M6.5 8 Q12 1.5 17.5 8 Q12 5.5 6.5 8z" fill="#3d322c"/><path d="M7.5 4.5 Q12 2 16.5 4.5 L16 6 Q12 4 8 6z" fill="#9a948e"/><rect x="9" y="11" width="2.2" height="0.9" fill="#3a2a22"/><rect x="13" y="11" width="2.2" height="0.9" fill="#3a2a22"/><path d="M2 21 Q12 17 22 21 V24 H2z" fill="#2f2724"/><path d="M17 18 L22 17 V22 L18 23z" fill="#d4cdc6"/></svg></div>
<div class="c" style="left:812px;">Marc Demo</div>
<svg class="a" style="left:1021px;top:8px" width="20" height="20" viewBox="0 0 20 20"><circle cx="10" cy="10" r="8.3" fill="none" stroke="#d6d6d6" stroke-width="2.6"/><path d="M10 5.8v4.6H7.2" fill="none" stroke="#d6d6d6" stroke-width="1.6"/></svg>
<div class="c" style="left:1268px;">My Company (San Francisco)</div>
<div class="c" style="right:163px;font-weight:bold;">$ 29,640.00</div>
<div class="badge" style="left:1746px;top:6px;">Quotation</div>
</div>
<div class="row" style="top:845px;height:35px;background:#fff;">
<div class="cb" style="left:19px;top:8px;"></div>
<div class="c" style="left:55.7px;font-weight:bold;letter-spacing:-0.1px;">S00022</div>
<div class="c" style="left:293px;">11/18/2020</div>
<div class="c" style="left:541px;">Gemini Furniture</div>
<div class="a" style="left:778.5px;top:6px;width:24px;height:24px;border-radius:50%;overflow:hidden;"><svg width="24" height="24" viewBox="0 0 24 24"><defs><radialGradient id="fg" cx="0.5" cy="0.45" r="0.5"><stop offset="0" stop-color="#b08a72"/><stop offset="1" stop-color="#7a5d4d"/></radialGradient></defs><circle cx="12" cy="12" r="12" fill="#5b4c43"/><path d="M17 4 L24 8 V24 H16z" fill="#8f857c"/><ellipse cx="12" cy="12.5" rx="5.6" ry="7.2" fill="url(#fg)"/><path d="M6.5 8 Q12 1.5 17.5 8 Q12 5.5 6.5 8z" fill="#3d322c"/><path d="M7.5 4.5 Q12 2 16.5 4.5 L16 6 Q12 4 8 6z" fill="#9a948e"/><rect x="9" y="11" width="2.2" height="0.9" fill="#3a2a22"/><rect x="13" y="11" width="2.2" height="0.9" fill="#3a2a22"/><path d="M2 21 Q12 17 22 21 V24 H2z" fill="#2f2724"/><path d="M17 18 L22 17 V22 L18 23z" fill="#d4cdc6"/></svg></div>
<div class="c" style="left:812px;">Marc Demo</div>
<svg class="a" style="left:1021px;top:8px" width="20" height="20" viewBox="0 0 20 20"><circle cx="10" cy="10" r="8.3" fill="none" stroke="#d6d6d6" stroke-width="2.6"/><path d="M10 5.8v4.6H7.2" fill="none" stroke="#d6d6d6" stroke-width="1.6"/></svg>
<div class="c" style="left:1268px;">My Company (San Francisco)</div>
<div class="c" style="right:163px;font-weight:bold;">$ 29,640.00</div>
<div class="badge" style="left:1746px;top:6px;">Sales Order</div>
</div>
<div class="row" style="top:880px;height:35px;background:#fbfbfb;">
<div class="cb" style="left:19px;top:8px;"></div>
<div class="c" style="left:55.7px;font-weight:bold;letter-spacing:-0.1px;">S00021</div>
<div class="c" style="left:293px;">11/18/2020</div>
<div class="c" style="left:541px;">Gemini Furniture</div>
<div class="a" style="left:778.5px;top:6px;width:24px;height:24px;border-radius:50%;overflow:hidden;"><svg width="24" height="24" viewBox="0 0 24 24"><defs><radialGradient id="fg" cx="0.5" cy="0.45" r="0.5"><stop offset="0" stop-color="#b08a72"/><stop offset="1" stop-color="#7a5d4d"/></radialGradient></defs><circle cx="12" cy="12" r="12" fill="#5b4c43"/><path d="M17 4 L24 8 V24 H16z" fill="#8f857c"/><ellipse cx="12" cy="12.5" rx="5.6" ry="7.2" fill="url(#fg)"/><path d="M6.5 8 Q12 1.5 17.5 8 Q12 5.5 6.5 8z" fill="#3d322c"/><path d="M7.5 4.5 Q12 2 16.5 4.5 L16 6 Q12 4 8 6z" fill="#9a948e"/><rect x="9" y="11" width="2.2" height="0.9" fill="#3a2a22"/><rect x="13" y="11" width="2.2" height="0.9" fill="#3a2a22"/><path d="M2 21 Q12 17 22 21 V24 H2z" fill="#2f2724"/><path d="M17 18 L22 17 V22 L18 23z" fill="#d4cdc6"/></svg></div>
<div class="c" style="left:812px;">Marc Demo</div>
<svg class="a" style="left:1021px;top:8px" width="20" height="20" viewBox="0 0 20 20"><circle cx="10" cy="10" r="8.3" fill="none" stroke="#d6d6d6" stroke-width="2.6"/><path d="M10 5.8v4.6H7.2" fill="none" stroke="#d6d6d6" stroke-width="1.6"/></svg>
<div class="c" style="left:1268px;">My Company (San Francisco)</div>
<div class="c" style="right:163px;font-weight:bold;">$ 14,750.00</div>
<div class="badge" style="left:1746px;top:6px;">Sales Order</div>
</div>
<div class="a" style="left:0;top:245px;width:1919px;height:5px;background:#fff;"></div>
<div class="a" style="left:0;top:249px;width:1899px;height:1px;background:#e3e6ea;"></div>
<div class="a" style="left:20.6px;top:246.8px;width:2.6px;height:1.2px;background:#555;opacity:0.75;"></div><div class="a" style="left:34.3px;top:246.8px;width:2.6px;height:1.2px;background:#555;opacity:0.75;"></div><div class="a" style="left:38.6px;top:246.8px;width:2.6px;height:1.2px;background:#555;opacity:0.75;"></div><div class="a" style="left:46.3px;top:246.8px;width:2.6px;height:1.2px;background:#555;opacity:0.75;"></div><div class="a" style="left:50.9px;top:246.8px;width:2.6px;height:1.2px;background:#555;opacity:0.75;"></div><div class="a" style="left:59.3px;top:246.8px;width:2.6px;height:1.2px;background:#555;opacity:0.75;"></div><div class="a" style="left:63.9px;top:246.8px;width:2.6px;height:1.2px;background:#555;opacity:0.75;"></div><div class="a" style="left:77.6px;top:246.8px;width:2.6px;height:1.2px;background:#555;opacity:0.75;"></div><div class="a" style="left:82.5px;top:246.8px;width:2.6px;height:1.2px;background:#555;opacity:0.75;"></div><div class="a" style="left:88.5px;top:246.8px;width:2.6px;height:1.2px;background:#555;opacity:0.75;"></div><div class="a" style="left:93.1px;top:246.8px;width:2.6px;height:1.2px;background:#555;opacity:0.75;"></div><div class="a" style="left:101.9px;top:246.8px;width:2.6px;height:1.2px;background:#555;opacity:0.75;"></div><div class="a" style="left:106.1px;top:246.8px;width:2.6px;height:1.2px;background:#555;opacity:0.75;"></div><div class="a" style="left:113.9px;top:246.8px;width:2.6px;height:1.2px;background:#555;opacity:0.75;"></div><div class="a" style="left:118.4px;top:246.8px;width:2.6px;height:1.2px;background:#555;opacity:0.75;"></div><div class="a" style="left:968.8px;top:246.8px;width:2.6px;height:1.2px;background:#555;opacity:0.75;"></div><div class="a" style="left:974.5px;top:246.8px;width:2.6px;height:1.2px;background:#555;opacity:0.75;"></div><div class="a" style="left:1010.6px;top:246.8px;width:2.6px;height:1.2px;background:#555;opacity:0.75;"></div><div class="a" style="left:1877.6px;top:246.8px;width:2.6px;height:1.2px;background:#555;opacity:0.75;"></div><div class="a" style="left:1887.6px;top:246.8px;width:2.6px;height:1.2px;background:#555;opacity:0.75;"></div>
<div class="a" style="left:1899px;top:248px;width:20px;height:665px;background:#f1f1f1;"></div>
<div class="a" style="left:1901px;top:248px;width:17px;height:291px;background:#c1c1c1;"></div>
<svg class="a" style="left:1904px;top:904px" width="11" height="7" viewBox="0 0 11 7"><path d="M0.5 0.5h10L5.5 6z" fill="#505050"/></svg>
<div id="thead">
<div class="cb" style="left:19px;top:7.5px;"></div>
<div class="h" style="left:54px">Number</div>
<div class="h" style="left:540px">Customer</div>
<div class="h" style="left:778px">Salesperson</div>
<div class="h" style="left:1015px">Activities</div>
<div class="h" style="left:1266px">Company</div>
<div class="h" style="left:1745px">Status</div>
<div class="h" style="right:201px">Total</div>
<svg class="a" style="left:1724px;top:13px" width="11" height="6" viewBox="0 0 11 6"><path d="M0 0h11L5.5 6z" fill="#a9a8cc"/></svg>
<div class="vd" style="left:48px;top:1px;height:33px;"></div>
<div class="vd" style="left:286px;top:1px;height:33px;"></div>
<div class="vd" style="left:534px;top:1px;height:33px;"></div>
<div class="vd" style="left:772px;top:1px;height:33px;"></div>
<div class="vd" style="left:1010px;top:1px;height:33px;"></div>
<div class="vd" style="left:1261px;top:1px;height:33px;"></div>
<div class="vd" style="left:1500px;top:1px;height:33px;"></div>
<div class="vd" style="left:1739px;top:1px;height:33px;"></div>
</div>
<div id="frow">
<div class="vd" style="left:48px;top:0;height:48px;background:#fff;"></div>
<div class="vd" style="left:286px;top:0;height:48px;background:#fff;"></div>
<div class="vd" style="left:534px;top:0;height:48px;background:#fff;"></div>
<div class="vd" style="left:772px;top:0;height:48px;background:#fff;"></div>
<div class="vd" style="left:1010px;top:0;height:48px;background:#fff;"></div>
<div class="vd" style="left:1261px;top:0;height:48px;background:#fff;"></div>
<div class="vd" style="left:1500px;top:0;height:48px;background:#fff;"></div>
<div class="vd" style="left:1739px;top:0;height:48px;background:#fff;"></div>
<div class="inp" style="left:54px;top:5px;width:216px;height:38px;border-color:#c8c8c8;"></div>
<div class="ph" style="left:67.3px;top:17px;">Search...</div>
<div class="inp" style="left:540px;top:5px;width:216px;height:38px;border-color:#c8c8c8;"></div>
<div class="ph" style="left:553.3px;top:17px;">Search...</div>
<div class="inp" style="left:778px;top:5px;width:216px;height:38px;border-color:#c8c8c8;"></div>
<div class="ph" style="left:791.3px;top:17px;">Search...</div>
<div class="inp" style="left:1267px;top:5px;width:216px;height:38px;border-color:#c8c8c8;"></div>
<div class="ph" style="left:1280.3px;top:17px;">Search...</div>
<div class="inp" style="left:1506px;top:5px;width:216px;height:38px;border-color:#c8c8c8;"></div>
<div class="ph" style="left:1519.3px;top:17px;">Search...</div>
<div class="inp" style="left:292px;top:5px;width:226px;height:38px;border-color:#c8c8c8;"></div>
<svg class="a" style="left:489px;top:20px" width="10" height="5" viewBox="0 0 10 5"><path d="M0 0h10L5 5z" fill="#111"/></svg>
<div class="inp" style="left:1745px;top:5px;width:159px;height:38px;border-color:#c8c8c8;"></div>
<svg class="a" style="left:1885px;top:20px" width="13" height="8" viewBox="0 0 13 8"><path d="M1.5 1.5l5 5 5-5" fill="none" stroke="#111" stroke-width="2"/></svg>
<div class="a" style="left:-1px;top:48px;width:1920px;height:2px;background:#dde0e4;"></div>
</div>
<div id="popup">
<div class="inp" style="left:13px;top:13.3px;width:252px;height:36.5px;border-color:#cfcfcf;border-radius:4px;"></div>
<div class="ph" style="left:20.5px;top:24px;color:#777;">Search for Columns..</div>
<div class="btn" style="left:278px;top:13px;width:44px;height:38px;background:#7b7aab;border-radius:4px;"></div>
<svg class="a" style="left:288px;top:21px" width="22" height="22" viewBox="0 0 22 22"><path d="M6.6 7.2A7.6 7.6 0 1 1 6.4 15.9" fill="none" stroke="#fff" stroke-width="3.2"/><path d="M1.8 3.5L2.2 11.8 10 11.4z" fill="#fff"/></svg>
<div class="a" style="left:0;top:63px;width:334px;height:500px;overflow:hidden;">
<div class="tg on" style="left:13px;top:0.30px;"><div class="k"></div></div>
<div class="fi" style="top:0.30px;"><span>Number</span></div>
<svg class="mv" style="top:5.80px" width="18" height="19" viewBox="0 0 18 19"><path d="M9 1.2v16.6" stroke="#111" stroke-width="1.5"/><path d="M1.2 9.5h15.6" stroke="#444" stroke-width="1.4"/><path d="M6.2 4L9 1.2 11.8 4M6.2 15L9 17.8 11.8 15M3.9 6.7L1.2 9.5 3.9 12.3M14.1 6.7L16.8 9.5 14.1 12.3" fill="none" stroke="#111" stroke-width="1.5"/></svg>
<div class="tg on" style="left:13px;top:33.07px;"><div class="k"></div></div>
<div class="fi" style="top:33.07px;"><span>Creation Date</span></div>
<svg class="mv" style="top:38.57px" width="18" height="19" viewBox="0 0 18 19"><path d="M9 1.2v16.6" stroke="#111" stroke-width="1.5"/><path d="M1.2 9.5h15.6" stroke="#444" stroke-width="1.4"/><path d="M6.2 4L9 1.2 11.8 4M6.2 15L9 17.8 11.8 15M3.9 6.7L1.2 9.5 3.9 12.3M14.1 6.7L16.8 9.5 14.1 12.3" fill="none" stroke="#111" stroke-width="1.5"/></svg>
<div class="tg off" style="left:13px;top:65.84px;"><div class="k"></div></div>
<div class="fi" style="top:65.84px;"><span>Delivery Date</span></div>
<svg class="mv" style="top:71.34px" width="18" height="19" viewBox="0 0 18 19"><path d="M9 1.2v16.6" stroke="#111" stroke-width="1.5"/><path d="M1.2 9.5h15.6" stroke="#444" stroke-width="1.4"/><path d="M6.2 4L9 1.2 11.8 4M6.2 15L9 17.8 11.8 15M3.9 6.7L1.2 9.5 3.9 12.3M14.1 6.7L16.8 9.5 14.1 12.3" fill="none" stroke="#111" stroke-width="1.5"/></svg>
<div class="tg off" style="left:13px;top:98.61px;"><div class="k"></div></div>
<div class="fi" style="top:98.61px;"><span>Expected Date</span></div>
<svg class="mv" style="top:104.11px" width="18" height="19" viewBox="0 0 18 19"><path d="M9 1.2v16.6" stroke="#111" stroke-width="1.5"/><path d="M1.2 9.5h15.6" stroke="#444" stroke-width="1.4"/><path d="M6.2 4L9 1.2 11.8 4M6.2 15L9 17.8 11.8 15M3.9 6.7L1.2 9.5 3.9 12.3M14.1 6.7L16.8 9.5 14.1 12.3" fill="none" stroke="#111" stroke-width="1.5"/></svg>
<div class="tg on" style="left:13px;top:131.38px;"><div class="k"></div></div>
<div class="fi" style="top:131.38px;"><span>Customer</span></div>
<svg class="mv" style="top:136.88px" width="18" height="19" viewBox="0 0 18 19"><path d="M9 1.2v16.6" stroke="#111" stroke-width="1.5"/><path d="M1.2 9.5h15.6" stroke="#444" stroke-width="1.4"/><path d="M6.2 4L9 1.2 11.8 4M6.2 15L9 17.8 11.8 15M3.9 6.7L1.2 9.5 3.9 12.3M14.1 6.7L16.8 9.5 14.1 12.3" fill="none" stroke="#111" stroke-width="1.5"/></svg>
<div class="tg on" style="left:13px;top:164.15px;"><div class="k"></div></div>
<div class="fi" style="top:164.15px;"><span>Salesperson</span></div>
<svg class="mv" style="top:169.65px" width="18" height="19" viewBox="0 0 18 19"><path d="M9 1.2v16.6" stroke="#111" stroke-width="1.5"/><path d="M1.2 9.5h15.6" stroke="#444" stroke-width="1.4"/><path d="M6.2 4L9 1.2 11.8 4M6.2 15L9 17.8 11.8 15M3.9 6.7L1.2 9.5 3.9 12.3M14.1 6.7L16.8 9.5 14.1 12.3" fill="none" stroke="#111" stroke-width="1.5"/></svg>
<div class="tg on" style="left:13px;top:196.92px;"><div class="k"></div></div>
<div class="fi" style="top:196.92px;"><span>Activities</span></div>
<svg class="mv" style="top:202.42px" width="18" height="19" viewBox="0 0 18 19"><path d="M9 1.2v16.6" stroke="#111" stroke-width="1.5"/><path d="M1.2 9.5h15.6" stroke="#444" stroke-width="1.4"/><path d="M6.2 4L9 1.2 11.8 4M6.2 15L9 17.8 11.8 15M3.9 6.7L1.2 9.5 3.9 12.3M14.1 6.7L16.8 9.5 14.1 12.3" fill="none" stroke="#111" stroke-width="1.5"/></svg>
<div class="tg off" style="left:13px;top:229.69px;"><div class="k"></div></div>
<div class="fi" style="top:229.69px;"><span>Sales Team</span></div>
<svg class="mv" style="top:235.19px" width="18" height="19" viewBox="0 0 18 19"><path d="M9 1.2v16.6" stroke="#111" stroke-width="1.5"/><path d="M1.2 9.5h15.6" stroke="#444" stroke-width="1.4"/><path d="M6.2 4L9 1.2 11.8 4M6.2 15L9 17.8 11.8 15M3.9 6.7L1.2 9.5 3.9 12.3M14.1 6.7L16.8 9.5 14.1 12.3" fill="none" stroke="#111" stroke-width="1.5"/></svg>
<div class="tg off" style="left:13px;top:262.46px;"><div class="k"></div></div>
<div class="fi" style="top:262.46px;"><span>Tags</span></div>
<svg class="mv" style="top:267.96px" width="18" height="19" viewBox="0 0 18 19"><path d="M9 1.2v16.6" stroke="#111" stroke-width="1.5"/><path d="M1.2 9.5h15.6" stroke="#444" stroke-width="1.4"/><path d="M6.2 4L9 1.2 11.8 4M6.2 15L9 17.8 11.8 15M3.9 6.7L1.2 9.5 3.9 12.3M14.1 6.7L16.8 9.5 14.1 12.3" fill="none" stroke="#111" stroke-width="1.5"/></svg>
<div class="tg off" style="left:13px;top:295.23px;"><div class="k"></div></div>
<div class="fi" style="top:295.23px;"><span>Warehouse</span></div>
<svg class="mv" style="top:300.73px" width="18" height="19" viewBox="0 0 18 19"><path d="M9 1.2v16.6" stroke="#111" stroke-width="1.5"/><path d="M1.2 9.5h15.6" stroke="#444" stroke-width="1.4"/><path d="M6.2 4L9 1.2 11.8 4M6.2 15L9 17.8 11.8 15M3.9 6.7L1.2 9.5 3.9 12.3M14.1 6.7L16.8 9.5 14.1 12.3" fill="none" stroke="#111" stroke-width="1.5"/></svg>
<div class="tg on" style="left:13px;top:328.00px;"><div class="k"></div></div>
<div class="fi" style="top:328.00px;"><span>Company</span></div>
<svg class="mv" style="top:333.50px" width="18" height="19" viewBox="0 0 18 19"><path d="M9 1.2v16.6" stroke="#111" stroke-width="1.5"/><path d="M1.2 9.5h15.6" stroke="#444" stroke-width="1.4"/><path d="M6.2 4L9 1.2 11.8 4M6.2 15L9 17.8 11.8 15M3.9 6.7L1.2 9.5 3.9 12.3M14.1 6.7L16.8 9.5 14.1 12.3" fill="none" stroke="#111" stroke-width="1.5"/></svg>
<div class="tg off" style="left:13px;top:360.77px;"><div class="k"></div></div>
<div class="fi" style="top:360.77px;"><span>Untaxed Amount</span></div>
<svg class="mv" style="top:366.27px" width="18" height="19" viewBox="0 0 18 19"><path d="M9 1.2v16.6" stroke="#111" stroke-width="1.5"/><path d="M1.2 9.5h15.6" stroke="#444" stroke-width="1.4"/><path d="M6.2 4L9 1.2 11.8 4M6.2 15L9 17.8 11.8 15M3.9 6.7L1.2 9.5 3.9 12.3M14.1 6.7L16.8 9.5 14.1 12.3" fill="none" stroke="#111" stroke-width="1.5"/></svg>
<div class="tg off" style="left:13px;top:393.54px;"><div class="k"></div></div>
<div class="fi" style="top:393.54px;"><span>Taxes</span></div>
<svg class="mv" style="top:399.04px" width="18" height="19" viewBox="0 0 18 19"><path d="M9 1.2v16.6" stroke="#111" stroke-width="1.5"/><path d="M1.2 9.5h15.6" stroke="#444" stroke-width="1.4"/><path d="M6.2 4L9 1.2 11.8 4M6.2 15L9 17.8 11.8 15M3.9 6.7L1.2 9.5 3.9 12.3M14.1 6.7L16.8 9.5 14.1 12.3" fill="none" stroke="#111" stroke-width="1.5"/></svg>
<div class="tg on" style="left:13px;top:426.31px;"><div class="k"></div></div>
<div class="fi" style="top:426.31px;"><span>Total</span></div>
<svg class="mv" style="top:431.81px" width="18" height="19" viewBox="0 0 18 19"><path d="M9 1.2v16.6" stroke="#111" stroke-width="1.5"/><path d="M1.2 9.5h15.6" stroke="#444" stroke-width="1.4"/><path d="M6.2 4L9 1.2 11.8 4M6.2 15L9 17.8 11.8 15M3.9 6.7L1.2 9.5 3.9 12.3M14.1 6.7L16.8 9.5 14.1 12.3" fill="none" stroke="#111" stroke-width="1.5"/></svg>
<div class="tg on" style="left:13px;top:459.08px;"><div class="k"></div></div>
<div class="fi" style="top:459.08px;"><span>Status</span></div>
<svg class="mv" style="top:464.58px" width="18" height="19" viewBox="0 0 18 19"><path d="M9 1.2v16.6" stroke="#111" stroke-width="1.5"/><path d="M1.2 9.5h15.6" stroke="#444" stroke-width="1.4"/><path d="M6.2 4L9 1.2 11.8 4M6.2 15L9 17.8 11.8 15M3.9 6.7L1.2 9.5 3.9 12.3M14.1 6.7L16.8 9.5 14.1 12.3" fill="none" stroke="#111" stroke-width="1.5"/></svg>
<div class="tg off" style="left:13px;top:491.85px;"><div class="k"></div></div>
<div class="fi" style="top:491.85px;"><span>Invoice Status</span></div>
<svg class="mv" style="top:497.35px" width="18" height="19" viewBox="0 0 18 19"><path d="M9 1.2v16.6" stroke="#111" stroke-width="1.5"/><path d="M1.2 9.5h15.6" stroke="#444" stroke-width="1.4"/><path d="M6.2 4L9 1.2 11.8 4M6.2 15L9 17.8 11.8 15M3.9 6.7L1.2 9.5 3.9 12.3M14.1 6.7L16.8 9.5 14.1 12.3" fill="none" stroke="#111" stroke-width="1.5"/></svg>
</div>
<div class="a" style="left:301px;top:63px;width:21px;height:500px;background:#f1f1f1;"></div>
<svg class="a" style="left:307px;top:71.5px" width="10" height="6" viewBox="0 0 10 6"><path d="M0 6h10L5 0z" fill="#a3a3a3"/></svg>
<div class="a" style="left:303px;top:84px;width:17px;height:76px;background:#c1c1c1;"></div>
<svg class="a" style="left:307px;top:548px" width="10" height="6" viewBox="0 0 10 6"><path d="M0 0h10L5 6z" fill="#505050"/></svg>
</div>
<div class="ann" style="left:538px;top:71.3px;line-height:18px;">Restore to<br>default view</div>
<div class="ann" style="left:575px;top:136px;">Change column order</div>
<div class="ann" style="left:432.5px;top:533.2px;line-height:18px;">Rename<br>&nbsp;Column</div>
<div class="ann" style="left:321px;top:699px;line-height:18.5px;">Hide/Show<br>Column</div>
<svg class="a" style="left:0;top:0" width="1919" height="913" viewBox="0 0 1919 913"><line x1="519.4" y1="98.3" x2="452.15" y2="155.15" stroke="#0035ff" stroke-width="3.5"/><polygon points="439.2,166.2 446.7,148.9 457.6,161.4" fill="#0035ff"/><line x1="569.9" y1="149.6" x2="429.1" y2="246.5" stroke="#0035ff" stroke-width="3"/><polygon points="415.3,255 424.5,239.6 433.7,253.4" fill="#0035ff"/><line x1="436.9" y1="522.6" x2="367.55" y2="423.85" stroke="#0035ff" stroke-width="3"/><polygon points="357.9,410.6 360.3,428.7 374.8,419" fill="#0035ff"/><line x1="325.6" y1="690.2" x2="234.05" y2="629.85" stroke="#0035ff" stroke-width="3"/><polygon points="218.5,620.9 228.7,636 239.4,623.7" fill="#0035ff"/><rect x="185" y="370.8" width="209.5" height="36.8" fill="none" stroke="#0035ff" stroke-width="3.5"/><path d="M185 614.2H216.6V644.6H184" fill="none" stroke="#0035ff" stroke-width="2.8"/></svg>
</body></html>
